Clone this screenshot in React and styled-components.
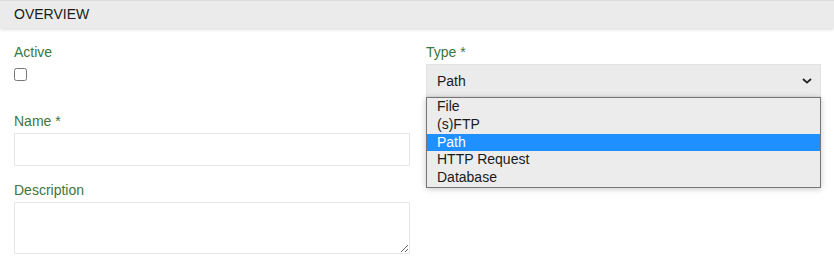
import React from 'react'
import styled, { createGlobalStyle } from 'styled-components'

const GlobalStyle = createGlobalStyle`
    html, body {
        margin: 0;
        padding: 0;
        background: #ffffff;
    }
    body {
        font-family: "Liberation Sans", Arial, sans-serif;
        font-size: 14px;
        color: #222;
    }
`;

const types = ['File', '(s)FTP', 'Path', 'HTTP Request', 'Database'];

const App = () => {
    return (
        <>
            <GlobalStyle />
            <Panel>
                <PanelHeader>OVERVIEW</PanelHeader>
                <FormGrid>
                    <Field>
                        <Label>Active</Label>
                        <Checkbox type="checkbox" />
                    </Field>
                    <Field>
                        <Label>Type *</Label>
                        <SelectWrapper>
                            <SelectBox>
                                <span>Path</span>
                                <svg width="10" height="6" viewBox="0 0 10 6">
                                    <path d="M1 1 L5 4.6 L9 1" fill="none" stroke="#222" strokeWidth="1.8" />
                                </svg>
                            </SelectBox>
                            <OptionList>
                                {types.map((t) => (
                                    <Option key={t} selected={t === 'Path'}>{t}</Option>
                                ))}
                            </OptionList>
                        </SelectWrapper>
                    </Field>
                    <Field>
                        <Label>Name *</Label>
                        <TextInput type="text" />
                    </Field>
                    <div></div>
                    <Field>
                        <Label>Description</Label>
                        <TextArea />
                    </Field>
                </FormGrid>
            </Panel>
        </>
    )
}

const Panel = styled.div`
    width: 834px;
`;

const PanelHeader = styled.div`
    height: 27px;
    line-height: 27px;
    border-top: 1px solid #dcdcdc;
    background: #ebebeb;
    box-shadow: 0 2px 3px rgba(0, 0, 0, 0.12);
    padding: 0 14px;
    font-size: 14px;
    color: #1a1a1a;
`;

const FormGrid = styled.div`
    display: grid;
    grid-template-columns: 396px 395px;
    column-gap: 16px;
    row-gap: 16px;
    padding: 16px 13px 0 14px;
`;

const Field = styled.div`
    display: flex;
    flex-direction: column;
    align-items: flex-start;
`;

const Label = styled.label`
    display: block;
    font-size: 14px;
    line-height: 16px;
    color: #3c763d;
    margin-bottom: 4px;
`;

const Checkbox = styled.input`
    width: 13px;
    height: 13px;
    margin: 4px 0 0 0;
`;

const TextInput = styled.input`
    box-sizing: border-box;
    width: 100%;
    height: 33px;
    margin: 0;
    border: 1px solid #e6e6e6;
    background: #fff;
    outline: none;
`;

const TextArea = styled.textarea`
    box-sizing: border-box;
    width: 100%;
    height: 52px;
    margin: 0;
    border: 1px solid #e6e6e6;
    background: #fff;
    outline: none;
`;

const SelectWrapper = styled.div`
    position: relative;
    width: 100%;
`;

const SelectBox = styled.div`
    box-sizing: border-box;
    height: 33px;
    display: flex;
    align-items: center;
    justify-content: space-between;
    padding: 0 8px 0 10px;
    border: 1px solid #e2e2e2;
    background: #ebebeb;
    font-size: 14px;
    color: #1a1a1a;
`;

const OptionList = styled.div`
    position: absolute;
    top: 33px;
    left: 0;
    right: 0;
    box-sizing: border-box;
    border: 1px solid #767676;
    background: #ececec;
    box-shadow: 0 1px 6px rgba(0, 0, 0, 0.22);
    z-index: 2;
`;

const Option = styled.div`
    height: 17.75px;
    line-height: 16px;
    padding-left: 10px;
    font-size: 14px;
    color: ${(props) => (props.selected ? '#ffffff' : '#1a1a1a')};
    background: ${(props) => (props.selected ? '#1e90ff' : 'transparent')};
`;

export default App;
